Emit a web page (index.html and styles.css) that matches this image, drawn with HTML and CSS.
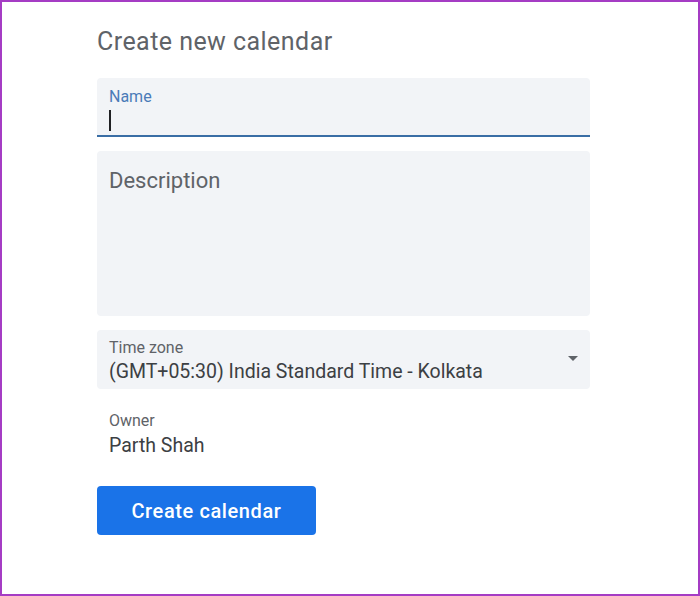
FILE: index.html
```html
<!DOCTYPE html>
<html>
<head>
<meta charset="utf-8">
<link rel="stylesheet" href="styles.css">
</head>
<body>
<div class="frame">
  <div class="form">
    <h1 class="title">Create new calendar</h1>
    <div class="field field-focused">
      <div class="label label-blue">Name</div>
      <div class="cursor"></div>
    </div>
    <div class="field field-area">
      <div class="placeholder">Description</div>
    </div>
    <div class="field field-select">
      <div class="select-text">
        <div class="label">Time zone</div>
        <div class="value">(GMT+05:30) India Standard Time - Kolkata</div>
      </div>
      <svg class="arrow" width="10" height="5" viewBox="0 0 10 5"><path d="M0 0 L10 0 L5 5 Z" fill="#5f6368"/></svg>
    </div>
    <div class="owner">
      <div class="label">Owner</div>
      <div class="value">Parth Shah</div>
    </div>
    <button class="btn">Create calendar</button>
  </div>
</div>
</body>
</html>
```
FILE: styles.css
```css
html, body {
  margin: 0;
  padding: 0;
  background: #fff;
}
.frame {
  width: 700px;
  height: 596px;
  box-sizing: border-box;
  border: 2px solid #a53cc4;
  background: #fff;
  font-family: Roboto, "Liberation Sans", sans-serif;
}
.form {
  width: 493px;
  margin-left: 95px;
  padding-top: 24px;
  display: flex;
  flex-direction: column;
}
.title {
  margin: 0;
  font-size: 25px;
  font-weight: 400;
  color: #5f6368;
  line-height: 32px;
  height: 52px;
  letter-spacing: 0.45px;
}
.field {
  background: #f2f4f7;
  border-radius: 4px 4px 0 0;
  box-sizing: border-box;
  padding: 0 12px;
  margin-bottom: 14px;
}
.field-focused {
  height: 59px;
  border-bottom: 2px solid #3a6ea5;
  padding-top: 10px;
}
.label {
  font-size: 16px;
  line-height: 18px;
  color: #5f6368;
}
.label-blue {
  color: #4a7bb8;
}
.cursor {
  width: 2px;
  height: 21px;
  background: #202124;
  margin-top: 4px;
}
.field-area {
  height: 165px;
  border-radius: 4px;
  padding-top: 17px;
}
.placeholder {
  font-size: 22px;
  line-height: 26px;
  color: #5f6368;
}
.field-select {
  height: 59px;
  border-radius: 4px;
  display: flex;
  align-items: flex-start;
  justify-content: space-between;
  padding-top: 9px;
  padding-right: 12px;
}
.select-text {
  display: flex;
  flex-direction: column;
  gap: 3px;
}
.value {
  font-size: 19.5px;
  line-height: 23px;
  color: #3c4043;
}
.arrow {
  margin-top: 17px;
}
.owner {
  padding: 9px 12px 0;
  height: 83px;
  box-sizing: border-box;
  display: flex;
  flex-direction: column;
  gap: 4px;
}
.btn {
  width: 219px;
  height: 49px;
  background: #1a73e8;
  color: #fff;
  border: none;
  border-radius: 4px;
  font-family: Roboto, "Liberation Sans", sans-serif;
  font-size: 20px;
  font-weight: 500;
  padding: 0;
  letter-spacing: 0.6px;
}
```
